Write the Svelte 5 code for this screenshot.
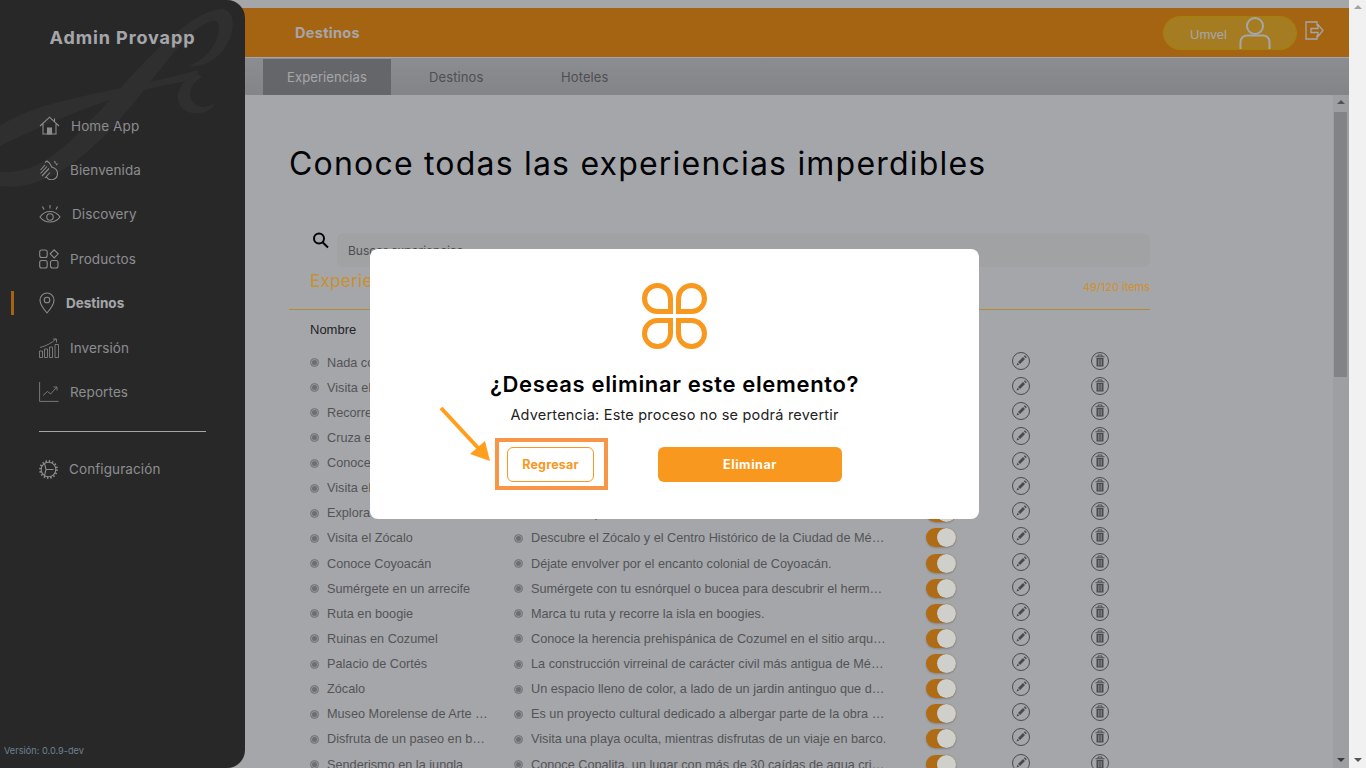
<script>
	// side menu, icons are raw svg bodies so the markup stays short
	const menu = [
		{ label: 'Home App', w: 21, h: 19, svg: '<path d="M1 10 10.5 1.2 20 10M15.5 2.5v3.5M4 8v10h13V8"/><rect x="8.5" y="12" width="4" height="6" fill="currentColor"/>' },
		{ label: 'Bienvenida', w: 20, h: 20, svg: '<path d="M1.500 10 6 5M1.500 13.500 8 6.500M3 16l7-7.500M6 18l5-5.500M6 2.500l2-1.500 2.500 2 2.500 4.500M13 7c3 1 5.500 3.500 5.500 6.500a6 6 0 0 1-11 3.500M15.500 1l1 2.500M18.500 3.500 17 5"/>' },
		{ label: 'Discovery', w: 22, h: 18, svg: '<path d="M1 12c3-4.500 6.500-5.500 10-5.500S18 7.500 21 12c-3 4-6.500 5-10 5S4 16 1 12z"/><circle cx="11" cy="12" r="3.200"/><path d="M11 0v3.500M3.500 1.500l1.500 3M18.500 1.500l-1.500 3"/>' },
		{ label: 'Productos', w: 20, h: 20, svg: '<rect x=".7" y="1" width="7.500" height="7.500" rx="2"/><rect x=".7" y="11.500" width="7.500" height="7.500" rx="2"/><rect x="11.500" y="11.500" width="7.500" height="7.500" rx="2"/><path d="M15.200.8l4 4-4 4.200-4-4.200z"/>' },
		{ label: 'Destinos', w: 16, h: 22, svg: '<path d="M8 1a7 7 0 0 1 7 7c0 5-7 13-7 13S1 13 1 8a7 7 0 0 1 7-7z"/><circle cx="8" cy="8" r="2.800"/>' },
		{ label: 'Inversión', w: 20, h: 20, svg: '<path stroke-width=".8" d="M.5 13h3v6.500h-3zM5.500 11h3v8.500h-3zM10.500 9h3v10.500h-3zM16 6.500h3.500v13H16zM1 9.500C7 8 12 5.500 17 1M14 1h3.500v3.500"/>' },
		{ label: 'Reportes', w: 20, h: 20, svg: '<path stroke-width=".8" d="M.6 0v19.400H19.500M4 13.500l4.500-4 3 2.500 6-6.500M14.500 5H18v3.500"/>' },
	];

	const rows = [
		['Nada como el mar', 'Disfruta de las mejores vistas desde el mar.'],
		['Visita el Castillo', 'Recorre los jardines y salones del castillo.'],
		['Recorre Reforma', 'Camina por la avenida más famosa de la ciudad.'],
		['Cruza el lago', 'Navega por el lago al atardecer.'],
		['Conoce Xochimilco', 'Pasea en trajinera por los canales.'],
		['Visita el museo', 'Admira las colecciones del museo.'],
		['Explora Teotihuacán', 'Sube a las pirámides al amanecer.'],
		['Visita el Zócalo', 'Descubre el Zócalo y el Centro Histórico de la Ciudad de México.'],
		['Conoce Coyoacán', 'Déjate envolver por el encanto colonial de Coyoacán.'],
		['Sumérgete en un arrecife', 'Sumérgete con tu esnórquel o bucea para descubrir el hermoso arrecife.'],
		['Ruta en boogie', 'Marca tu ruta y recorre la isla en boogies.'],
		['Ruinas en Cozumel', 'Conoce la herencia prehispánica de Cozumel en el sitio arqueológico.'],
		['Palacio de Cortés', 'La construcción virreinal de carácter civil más antigua de México.'],
		['Zócalo', 'Un espacio lleno de color, a lado de un jardin antinguo que destaca.'],
		['Museo Morelense de Arte Contemporáneo', 'Es un proyecto cultural dedicado a albergar parte de la obra de artistas.'],
		['Disfruta de un paseo en barco', 'Visita una playa oculta, mientras disfrutas de un viaje en barco.'],
		['Senderismo en la jungla', 'Conoce Copalita, un lugar con más de 30 caídas de agua cristalina.'],
	];
</script>

<div class="shell">
	<div class="page">
		<aside class="side">
			<svg class="mark" width="245" height="200" viewBox="0 0 245 200" aria-hidden="true">
				<path d="M0 126C40 98 120 92 198 70l-2 10C150 86 95 100 0 146z" />
				<path d="M0 172C40 174 66 148 106 104 146 60 186 14 220 9c18-2 18 32-6 50-8 6-18 8-26 7 16-5 30-20 31-38 0-6-4-9-10-6C184 32 156 78 126 112 90 154 48 192 0 186z" />
				<path d="M198 74c-22 8-26 28-12 37 10 5 24 2 30-8-8 4-16 6-21 1-8-7-6-20 7-27z" />
			</svg>
			<h2>Admin Provapp</h2>
			<nav>
				{#each menu as item}
					<a class="item" class:active={item.label === 'Destinos'} href="#top">
						<svg width={item.w} height={item.h} viewBox="0 0 {item.w} {item.h}" aria-hidden="true">{@html item.svg}</svg>
						<span>{item.label}</span>
					</a>
				{/each}
			</nav>
			<hr />
			<a class="item" href="#top">
				<svg width="19" height="19" viewBox="0 0 19 19" aria-hidden="true">
					<circle cx="9.500" cy="9.500" r="7.300" />
					<circle cx="9.500" cy="9.500" r="8.500" stroke-width="1.800" stroke-dasharray="1.500 1.840" />
					<path d="M5.500 3.500 7 9.500 5.500 15.500M7 9.500h7.500" />
				</svg>
				<span>Configuración</span>
			</a>
			<small>Versión: 0.0.9-dev</small>
		</aside>

		<main class="main">
			<header class="top">
				<strong>Destinos</strong>
				<div class="user">
					<span>Umvel</span>
					<svg width="34" height="34" viewBox="0 0 34 34" aria-hidden="true">
						<circle cx="17" cy="10" r="8" />
						<path d="M2.500 34v-8c0-4 3-6.500 6.500-6.500h16c3.500 0 6.500 2.500 6.500 6.500v8" />
					</svg>
				</div>
				<svg class="logout" width="19" height="19" viewBox="0 0 19 19" aria-hidden="true">
					<path d="M12 5V1H1v17h11v-4M6 7.500h7V3.500l5 6-5 6v-4H6z" />
				</svg>
			</header>

			<div class="tabs">
				<a class="tab on" href="#top">Experiencias</a>
				<a class="tab" href="#top">Destinos</a>
				<a class="tab" href="#top">Hoteles</a>
			</div>

			<div class="scroller">
				<section class="content">
					<h1>Conoce todas las experiencias imperdibles</h1>

					<div class="search">
						<svg width="20" height="20" viewBox="0 0 20 20" aria-hidden="true">
							<circle cx="8" cy="7.500" r="5" />
							<path d="M11.800 11.500 17 16.500" />
						</svg>
						<input placeholder="Buscar experiencias" />
					</div>

					<div class="heading">
						<h3>Experiencias</h3>
						<span>49/120 items</span>
					</div>

					<div class="colname">Nombre</div>

					{#each rows as row}
						<div class="row">
							<div class="cell"><i class="dot"></i><span>{row[0]}</span></div>
							<div class="cell"><i class="dot"></i><span>{row[1]}</span></div>
							<div class="toggle"><i></i></div>
							<svg class="act" width="20" height="20" viewBox="0 0 20 20" aria-hidden="true">
								<circle cx="10" cy="10" r="8.500" />
								<path class="solid" d="M12 6 14 8 9 13 7 11zM6.500 11.700l1.800 1.800-2.800 1zM12.800 5.200l1-1 2 2-1 1z" />
							</svg>
							<svg class="act trash" width="20" height="20" viewBox="0 0 20 20" aria-hidden="true">
								<circle cx="10" cy="10" r="8.500" />
								<path d="M5.500 5.800h9M8 5.500V4h4v1.500" />
								<path class="solid" d="M6.500 7h7v8.500h-7z" />
								<path class="cut" d="M8.500 8v6.500M10 8v6.500M11.500 8v6.500" />
							</svg>
						</div>
					{/each}
				</section>
				<div class="bar inner">
					<b class="up"></b>
					<div class="thumb"></div>
					<b class="down"></b>
				</div>
			</div>
		</main>

		<div class="overlay">
			<div class="modal" role="dialog">
				<svg width="66" height="66" viewBox="0 0 66 66" aria-hidden="true">
					<path d="M28.500 28.500H15.500a13 13 0 1 1 13-13z" />
					<path d="M36.500 28.500H49.500a13 13 0 1 0-13-13z" />
					<path d="M28.500 37.500H15.500a13 13 0 1 0 13 13z" />
					<path d="M36.500 37.500H49.500a13 13 0 1 1-13 13z" />
				</svg>
				<h4>¿Deseas eliminar este elemento?</h4>
				<p>Advertencia: Este proceso no se podrá revertir</p>
				<div class="actions">
					<div class="back">
						<button class="ghost">Regresar</button>
						<div class="hint"></div>
						<svg class="arrow" width="56" height="60" viewBox="0 0 56 60" aria-hidden="true">
							<path d="M4 4 43 46" />
							<polygon points="53,57 48,37 33,50" />
						</svg>
					</div>
					<button class="solid-btn">Eliminar</button>
				</div>
			</div>
		</div>
	</div>

	<div class="bar outer">
		<b class="up"></b>
		<b class="down"></b>
	</div>
</div>

<style>
	:global(body) {
		overflow: hidden;
		font-family: Inter, "Liberation Sans", sans-serif;
	}

	.shell {
		display: flex;
		height: 768px;
		overflow: hidden;
	}

	.page {
		position: relative;
		flex: 1;
		display: flex;
		min-width: 0;
	}

	/* sidebar */
	.side {
		position: relative;
		flex: 0 0 245px;
		margin-right: -18px;
		display: flex;
		flex-direction: column;
		background: #3c3a36;
		border-radius: 0 18px 18px 0;
		overflow: hidden;
	}

	.mark {
		position: absolute;
		left: 0;
		top: 0;
	}

	.mark path {
		fill: #474540;
	}

	.side h2 {
		position: relative;
		margin: 26px 0 54.400px;
		height: 23px;
		font-size: 18px;
		line-height: 23px;
		font-weight: 700;
		letter-spacing: .9px;
		text-align: center;
		color: #fff;
	}

	.item {
		position: relative;
		display: flex;
		align-items: center;
		gap: 11px;
		height: 44.400px;
		padding-left: 39px;
		font-size: 13.500px;
		letter-spacing: .1px;
		color: #d6d6d6;
		text-decoration: none;
	}

	.item svg {
		fill: none;
		stroke: #d6d6d6;
		stroke-width: 1.100;
		color: #d6d6d6;
	}

	.item.active {
		font-weight: 700;
		color: #fff;
		letter-spacing: 0;
	}

	.item.active::before {
		content: "";
		position: absolute;
		left: 11px;
		top: 10px;
		width: 3px;
		height: 24px;
		background: #ff9818;
	}

	.side hr {
		position: relative;
		width: 167px;
		margin: 17px 0 15px 39px;
		border: 0;
		border-top: 1px solid #fff;
	}

	.side small {
		position: absolute;
		left: 4px;
		bottom: 12px;
		font-size: 9.200px;
		color: #a5c4d8;
	}

	/* main column */
	.main {
		flex: 1;
		min-width: 0;
		display: flex;
		flex-direction: column;
		padding-top: 8px;
		background: #fff;
	}

	.top {
		display: flex;
		align-items: center;
		flex: 0 0 49px;
		padding: 0 25px 0 68px;
		background: #ff9812;
		border-bottom: 1px solid #fff;
		color: #fff;
	}

	.top strong {
		margin-top: -1px;
		font-size: 14.500px;
		font-weight: 700;
		letter-spacing: .3px;
		color: #fff;
	}

	.user {
		display: flex;
		align-items: center;
		justify-content: space-between;
		box-sizing: border-box;
		width: 134px;
		height: 34px;
		margin: 1px -1px 0 auto;
		padding: 0 27px;
		background: #ffbd2c;
		border: 1px solid #ffc400;
		border-radius: 17px;
		font-family: "Liberation Sans", sans-serif;
		font-size: 13px;
		overflow: hidden;
	}

	.user span {
		margin-top: 2px;
		margin-left: -1px;
	}

	.user svg {
		flex: none;
		margin-right: -3px;
		margin-top: -1px;
		fill: none;
		stroke: #fff;
		stroke-width: 2;
	}

	.logout {
		margin-left: 9px;
		margin-top: -5px;
		fill: none;
		stroke: #fff;
		stroke-width: 1.300;
	}

	.tabs {
		display: flex;
		flex: 0 0 37px;
		padding-left: 36px;
		background: linear-gradient(#d8d8d8, #cbcbcb);
	}

	.tab {
		display: flex;
		align-items: center;
		justify-content: center;
		width: 128.500px;
		margin-top: 1px;
		font-size: 13px;
		letter-spacing: .1px;
		color: #777;
		text-decoration: none;
	}

	.tab.on {
		width: 128px;
		margin-right: 1px;
		background: #9b9b9b;
		color: #fff;
	}

	.scroller {
		flex: 1;
		min-height: 0;
		display: flex;
		overflow: hidden;
	}

	.content {
		flex: 1;
		min-width: 0;
		padding: 0 183px 0 62px;
	}

	h1 {
		margin: 51px 0 49px;
		height: 38px;
		font-size: 32px;
		line-height: 36px;
		font-weight: 400;
		letter-spacing: 1.200px;
		color: #000;
		white-space: nowrap;
	}

	.search {
		display: flex;
		align-items: flex-start;
		gap: 6px;
		margin-left: 22px;
	}

	.search svg {
		flex: none;
		margin-top: -2px;
		fill: none;
		stroke: #000;
		stroke-width: 2;
	}

	.search input {
		flex: 1;
		box-sizing: border-box;
		height: 34px;
		padding: 0 11px;
		border: 0;
		border-radius: 6px;
		background: #f9f9f6;
		font: 12px Inter, sans-serif;
	}

	.search input::placeholder {
		color: #777;
	}

	.heading {
		position: relative;
		z-index: 3;
		display: flex;
		align-items: flex-end;
		justify-content: space-between;
		height: 43px;
		padding-left: 21px;
		border-bottom: 1px solid #b58a33;
		box-sizing: border-box;
	}

	.heading h3 {
		margin: 0 0 18px;
		font-size: 17px;
		font-weight: 400;
		letter-spacing: .3px;
		color: #c6912f;
	}

	.heading span {
		margin-bottom: 15px;
		font-size: 11px;
		color: #d08f2c;
	}

	.colname {
		height: 39px;
		padding: 12px 0 0 21px;
		box-sizing: border-box;
		font-family: "Liberation Sans", sans-serif;
		font-size: 13px;
		color: #333;
	}

	.row {
		display: grid;
		grid-template-columns: 204px 412px 85px 79px 20px;
		align-items: center;
		height: 25.125px;
		padding-left: 21px;
		font-family: "Liberation Sans", sans-serif;
		font-size: 12.700px;
		color: #7f7f7f;
	}

	.cell {
		display: flex;
		align-items: center;
		gap: 8px;
		min-width: 0;
		margin-top: 2px;
		padding-right: 25px;
	}

	.cell span {
		overflow: hidden;
		white-space: nowrap;
		text-overflow: ellipsis;
	}

	.cell:nth-child(2) {
		padding-right: 39px;
	}

	.dot {
		flex: none;
		box-sizing: border-box;
		width: 9px;
		height: 9px;
		border: 1px solid #bbb;
		border-radius: 50%;
		background: #a8a8a8;
		box-shadow: inset 0 0 0 1px #e6e6e6;
	}

	.toggle {
		position: relative;
		z-index: 3;
		display: flex;
		justify-content: flex-end;
		width: 30px;
		height: 19px;
		margin-top: 1px;
		border-radius: 10px;
		background: #b06c14;
		box-shadow: 0 1px 2px rgba(0, 0, 0, .2);
	}

	.toggle i {
		width: 19px;
		height: 19px;
		border-radius: 50%;
		background: #cfcfcb;
		box-shadow: 0 0 1px rgba(120, 90, 50, .7);
	}

	.act {
		margin-top: -2px;
		fill: none;
		stroke: #707070;
		stroke-width: 1;
	}

	.act .solid {
		fill: #707070;
		stroke: none;
	}

	.act .cut {
		stroke: #ddd;
		stroke-width: .7;
	}

	/* scrollbars */
	.bar {
		position: relative;
		flex: 0 0 16px;
	}

	.bar b {
		position: absolute;
		left: 50%;
		margin-left: -4px;
		border-left: 4px solid transparent;
		border-right: 4px solid transparent;
	}

	.bar .up {
		top: 5px;
		border-bottom: 4px solid #7c7c7c;
	}

	.bar .down {
		bottom: 6px;
		border-top: 4px solid #555;
	}

	.inner {
		background: #f5f5f5;
	}

	.thumb {
		position: absolute;
		left: 1px;
		right: 2px;
		top: 17px;
		height: 265px;
		background: #c8c8c8;
	}

	.outer {
		flex-basis: 17px;
		background: #f1f1f1;
	}

	.outer .up {
		border-bottom-color: #a3a3a3;
	}

	/* delete dialog, no z-index on the backdrop: toggles sit above the dimmed layer */
	.overlay {
		position: absolute;
		inset: 0;
		display: flex;
		align-items: center;
		justify-content: center;
		background: rgba(5, 8, 16, .36);
	}

	.modal {
		position: relative;
		z-index: 4;
		display: flex;
		flex-direction: column;
		align-items: center;
		box-sizing: border-box;
		width: 609px;
		height: 270px;
		padding-top: 34px;
		background: #fff;
		border-radius: 8px;
	}

	.modal > svg {
		fill: none;
		stroke: #f9981f;
		stroke-width: 5;
	}

	.modal h4 {
		margin: 22px 0 0;
		font-size: 22px;
		line-height: 26px;
		font-weight: 600;
		letter-spacing: .65px;
		color: #000;
	}

	.modal p {
		margin: 9px 0 0;
		font-size: 14.500px;
		line-height: 18px;
		letter-spacing: .2px;
		color: #222;
	}

	.actions {
		display: flex;
		gap: 64px;
		margin-top: 23px;
	}

	.back {
		position: relative;
	}

	button {
		display: block;
		height: 35px;
		border-radius: 6px;
		font: 700 12.500px Inter, sans-serif;
		letter-spacing: .2px;
	}

	.ghost {
		width: 87px;
		background: #fff;
		border: 1px solid #f9981f;
		color: #f9981f;
	}

	.solid-btn {
		width: 184px;
		background: #f9981f;
		border: 0;
		letter-spacing: .6px;
		color: #fff;
	}

	.hint {
		position: absolute;
		inset: -9px -14px -8px -12px;
		border: 4px solid #f79646;
		pointer-events: none;
	}

	.arrow {
		position: absolute;
		left: -70px;
		top: -43px;
	}

	.arrow path {
		fill: none;
		stroke: #ff9f1c;
		stroke-width: 4;
	}

	.arrow polygon {
		fill: #ff9f1c;
	}
</style>
